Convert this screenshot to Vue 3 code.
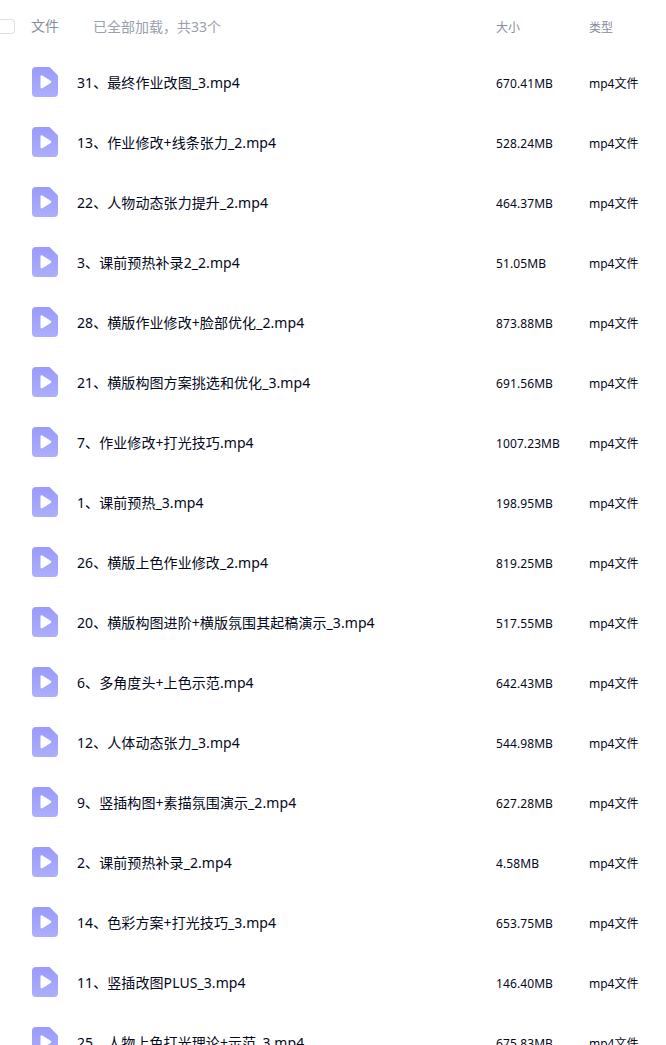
<template>
  <div class="page">
    <div class="list">
      <div class="head">
        <span class="check"></span>
        <span class="head-file">文件</span>
        <span class="head-count">已全部加载，共33个</span>
        <span class="col-size">大小</span>
        <span class="col-type">类型</span>
      </div>
      <div v-for="file in files" :key="file.name" class="row">
        <svg class="file-icon" viewBox="0 0 26 30" width="26" height="30">
          <defs>
            <linearGradient id="iconFill" x1="0" y1="0" x2="0" y2="1">
              <stop offset="0" stop-color="#9a9bfb" />
              <stop offset="1" stop-color="#acaeff" />
            </linearGradient>
          </defs>
          <path d="M4 0H17.5L26 8.5V26a4 4 0 0 1-4 4H4a4 4 0 0 1-4-4V4a4 4 0 0 1 4-4Z" fill="url(#iconFill)" />
          <path d="M8.5 9.6c0-1.1.9-1.6 1.8-1.1l8.4 5.3c.8.5.8 1.6 0 2.1l-8.4 5.3c-.9.5-1.8 0-1.8-1.1Z" fill="#fff" />
        </svg>
        <span class="name">{{ file.name }}</span>
        <span class="col-size">{{ file.size }}</span>
        <span class="col-type">mp4文件</span>
      </div>
    </div>
  </div>
</template>

<script setup>
const files = [
  { name: '31、最终作业改图_3.mp4', size: '670.41MB' },
  { name: '13、作业修改+线条张力_2.mp4', size: '528.24MB' },
  { name: '22、人物动态张力提升_2.mp4', size: '464.37MB' },
  { name: '3、课前预热补录2_2.mp4', size: '51.05MB' },
  { name: '28、横版作业修改+脸部优化_2.mp4', size: '873.88MB' },
  { name: '21、横版构图方案挑选和优化_3.mp4', size: '691.56MB' },
  { name: '7、作业修改+打光技巧.mp4', size: '1007.23MB' },
  { name: '1、课前预热_3.mp4', size: '198.95MB' },
  { name: '26、横版上色作业修改_2.mp4', size: '819.25MB' },
  { name: '20、横版构图进阶+横版氛围其起稿演示_3.mp4', size: '517.55MB' },
  { name: '6、多角度头+上色示范.mp4', size: '642.43MB' },
  { name: '12、人体动态张力_3.mp4', size: '544.98MB' },
  { name: '9、竖插构图+素描氛围演示_2.mp4', size: '627.28MB' },
  { name: '2、课前预热补录_2.mp4', size: '4.58MB' },
  { name: '14、色彩方案+打光技巧_3.mp4', size: '653.75MB' },
  { name: '11、竖插改图PLUS_3.mp4', size: '146.40MB' },
  { name: '25、人物上色打光理论+示范_3.mp4', size: '675.83MB' }
];
</script>

<style scoped>
.page {
  width: 666px;
  height: 1045px;
  overflow: hidden;
  background: #fff;
  font-family: "Noto Sans", "Noto Sans CJK SC", sans-serif;
}
.head {
  display: flex;
  align-items: center;
  height: 53px;
  font-size: 12px;
  color: #878c9c;
}
.check {
  width: 15px;
  height: 15px;
  border: 1px solid #dcdfe6;
  border-left: none;
  border-radius: 0 4px 4px 0;
  box-sizing: border-box;
}
.head-file {
  margin-left: 16px;
  width: 62px;
  font-size: 14px;
  line-height: 18px;
  margin-bottom: 2px;
}
.head-count {
  width: 403px;
  font-size: 14px;
  line-height: 18px;
  color: #9a9eae;
}
.row {
  display: flex;
  align-items: center;
  height: 60px;
  color: #03081a;
}
.file-icon {
  margin-left: 32px;
  margin-top: -2px;
  flex: none;
}
.name {
  margin-left: 19px;
  width: 419px;
  flex: none;
  font-size: 14px;
  line-height: 18px;
  letter-spacing: 0.08px;
  white-space: nowrap;
}
.col-size {
  width: 93px;
  flex: none;
  font-size: 12px;
  line-height: 18px;
  margin-top: 2px;
  letter-spacing: 0.1px;
}
.col-type {
  font-size: 12px;
  line-height: 18px;
  margin-top: 2px;
  white-space: nowrap;
}
</style>
<style>
html, body {
  margin: 0;
  overflow: hidden;
}
</style>
